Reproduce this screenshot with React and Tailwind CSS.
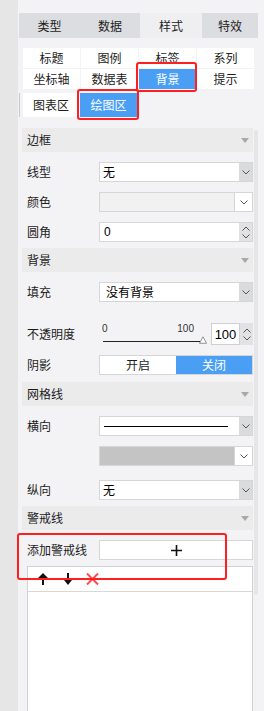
import React from "react";

const Chev = ({ up }) => (
  <svg width="8" height="5" viewBox="0 0 8 5">
    <path
      d={up ? "M0.5 4.5 L4 1 L7.5 4.5" : "M0.5 0.5 L4 4 L7.5 0.5"}
      fill="none"
      stroke="#555"
      strokeWidth="1"
    />
  </svg>
);

const Header = ({ title, className = "" }) => (
  <div className={`flex h-[24px] items-center justify-between bg-[#ebebec] pl-[5px] pr-[4px] ${className}`}>
    <span className="text-[12px] leading-none text-[#1c1c1c]">{title}</span>
    <svg width="8" height="5" viewBox="0 0 8 5">
      <path d="M0 0 L8 0 L4 5 Z" fill="#a8a8a8" />
    </svg>
  </div>
);

const Row = ({ label, className = "", children }) => (
  <div className={`flex h-[20px] items-center ${className}`}>
    <div className="w-[77px] pl-[5px] text-[12px] leading-none text-[#1c1c1c]">{label}</div>
    {children}
  </div>
);

const Select = ({ children }) => (
  <div className="flex h-[20px] w-[154px] border border-[#d6d6d6] bg-white">
    <div className="flex flex-1 items-center pl-[3px] text-[12px] leading-none text-black">{children}</div>
    <div className="flex w-[13px] items-center justify-center bg-[#dadbdd]">
      <Chev />
    </div>
  </div>
);

const Spinner = () => (
  <div className="flex w-[13px] flex-col items-center justify-center gap-[3px] bg-[#e2e2e4]">
    <Chev up />
    <Chev />
  </div>
);

export default function App() {
  return (
    <div className="relative flex h-[711px] w-[264px] overflow-hidden bg-[#f3f3f5] font-['Noto_Sans_CJK_SC','Liberation_Sans',sans-serif] text-[#1c1c1c]">
      <div className="w-[18px] shrink-0 bg-[#e6e6e6]" />
      <div className="flex w-[246px] flex-col">
        {/* top tabs */}
        <div className="ml-[1px] mt-[13px] flex h-[25px] text-[12px] leading-none">
          <div className="flex w-[61px] items-center justify-center bg-[#dcdde0]">类型</div>
          <div className="flex w-[60px] items-center justify-center bg-[#dcdde0]">数据</div>
          <div className="flex w-[62px] items-center justify-center bg-[#efeff1]">样式</div>
          <div className="flex w-[56px] items-center justify-center bg-[#dcdde0]">特效</div>
        </div>

        {/* sub tabs */}
        <div className="ml-[5px] mt-[10px] grid w-[231px] grid-cols-[57px_57px_57px_57px] grid-rows-[20px_20px] gap-px text-[12px] leading-none">
          <div className="flex items-center justify-center bg-white">标题</div>
          <div className="flex items-center justify-center bg-white">图例</div>
          <div className="flex items-center justify-center bg-white">标签</div>
          <div className="flex items-center justify-center bg-white">系列</div>
          <div className="flex items-center justify-center bg-white">坐标轴</div>
          <div className="flex items-center justify-center bg-white">数据表</div>
          <div className="flex items-center justify-center bg-[#4a9ff5] text-white">背景</div>
          <div className="flex items-center justify-center bg-white">提示</div>
        </div>

        {/* third row */}
        <div className="ml-[1px] mt-[4px] flex h-[24px] gap-[1px] border-l border-[#c8c8c8] pl-[3px] text-[12px] leading-none">
          <div className="flex w-[56px] items-center justify-center bg-white">图表区</div>
          <div className="flex w-[57px] items-center justify-center bg-[#4a9ff5] text-white">绘图区</div>
        </div>

        {/* content + scrollbar */}
        <div className="mt-[11px] flex flex-1">
          <div className="ml-[4px] flex w-[231px] flex-col">
            <Header title="边框" />
            <Row label="线型" className="mt-[10px]">
              <Select>无</Select>
            </Row>
            <Row label="颜色" className="mt-[10px]">
              <div className="flex h-[20px] w-[154px] border border-[#d6d6d6] bg-[#f1f1f2]">
                <div className="flex-1" />
                <div className="flex w-[18px] items-center justify-center border-l border-[#d6d6d6] bg-white">
                  <Chev />
                </div>
              </div>
            </Row>
            <Row label="圆角" className="mt-[10px]">
              <div className="flex h-[20px] w-[154px] border border-[#d6d6d6] bg-white">
                <div className="flex flex-1 items-center pl-[4px] font-['Liberation_Sans',sans-serif] text-[12px] leading-none text-black">0</div>
                <Spinner />
              </div>
            </Row>

            <Header title="背景" className="mt-[6px]" />
            <Row label="填充" className="mt-[10px]">
              <Select>
                <span className="pl-[3px]">没有背景</span>
              </Select>
            </Row>
            <div className="mt-[21px] flex h-[22px] items-center">
              <div className="w-[77px] pl-[5px] text-[12px] leading-none">不透明度</div>
              <div className="flex w-[108px] flex-col self-stretch">
                <div className="flex justify-between pl-[3px] pr-[13px] pt-[1px] font-['Liberation_Sans',sans-serif] text-[10px] leading-[10px] text-[#333]">
                  <span>0</span>
                  <span>100</span>
                </div>
                <div className="mt-[2px] flex items-end">
                  <div className="mb-[2px] ml-[4px] h-px w-[97px] bg-[#222]" />
                  <svg width="8" height="8" viewBox="0 0 8 8" className="ml-[-1px]">
                    <path d="M4 0.8 L7.5 7.3 L0.5 7.3 Z" fill="white" stroke="#888" strokeWidth="0.9" />
                  </svg>
                </div>
              </div>
              <div className="ml-[4px] flex h-[22px] w-[42px]">
                <div className="flex w-[29px] items-center justify-center border border-[#d0d0d0] bg-white font-['Liberation_Sans',sans-serif] text-[13px] leading-none text-black">100</div>
                <Spinner />
              </div>
            </div>
            <Row label="阴影" className="mt-[10px]">
              <div className="flex h-[20px] w-[154px] border border-[#d6d6d6] text-[12px] leading-none">
                <div className="flex flex-1 items-center justify-center bg-white">开启</div>
                <div className="flex flex-1 items-center justify-center bg-[#4a9ff5] text-white">关闭</div>
              </div>
            </Row>

            <Header title="网格线" className="mt-[7px]" />
            <Row label="横向" className="mt-[10px]">
              <Select>
                <div className="ml-[1px] h-px w-[124px] bg-black" />
              </Select>
            </Row>
            <Row label="" className="mt-[10px]">
              <div className="flex h-[20px] w-[154px] border border-[#d6d6d6] bg-[#c4c4c4]">
                <div className="flex-1" />
                <div className="flex w-[18px] items-center justify-center border-l border-[#d6d6d6] bg-white">
                  <Chev />
                </div>
              </div>
            </Row>
            <Row label="纵向" className="mt-[14px]">
              <Select>无</Select>
            </Row>

            <Header title="警戒线" className="mt-[6px]" />
            <Row label="添加警戒线" className="mt-[10px]">
              <div className="flex h-[20px] w-[154px] items-center justify-center border border-[#d6d6d6] bg-white">
                <svg width="11" height="11" viewBox="0 0 11 11">
                  <path d="M5.5 0 V11 M0 5.5 H11" stroke="#111" strokeWidth="1.6" />
                </svg>
              </div>
            </Row>
            <div className="ml-[5px] mt-[6px] flex flex-1 flex-col border border-b-0 border-[#d2d2d2] bg-white">
              <div className="flex h-[25px] items-center border-b border-[#d8d8d8]">
                <svg width="10" height="12" viewBox="0 0 10 12" className="ml-[10px]">
                  <path d="M5 0 L10 5 L6 5 L6 12 L4 12 L4 5 L0 5 Z" fill="#111" />
                </svg>
                <svg width="8" height="12" viewBox="0 0 8 12" className="ml-[16px]">
                  <path d="M3 0 L5 0 L5 7 L8 7 L4 12 L0 7 L3 7 Z" fill="#111" />
                </svg>
                <svg width="13" height="12" viewBox="0 0 13 12" className="ml-[14px]">
                  <path d="M1 0.5 L12 11.5 M12 0.5 L1 11.5" stroke="#ff4a4a" strokeWidth="2" />
                </svg>
              </div>
            </div>
          </div>
          <div className="ml-[1px] mt-[2px] h-[465px] w-[4px] rounded-full bg-[#e6e6e8]" />
        </div>
      </div>

      {/* red annotation boxes */}
      <div className="absolute left-[136px] top-[62px] h-[30px] w-[61px] rounded-[3px] border-2 border-[#ff1f1f]" />
      <div className="absolute left-[77px] top-[89px] h-[31px] w-[62px] rounded-[3px] border-2 border-[#ff1f1f]" />
      <div className="absolute left-[17px] top-[533px] h-[47px] w-[210px] rounded-[3px] border-2 border-[#ff1f1f]" />
    </div>
  );
}
